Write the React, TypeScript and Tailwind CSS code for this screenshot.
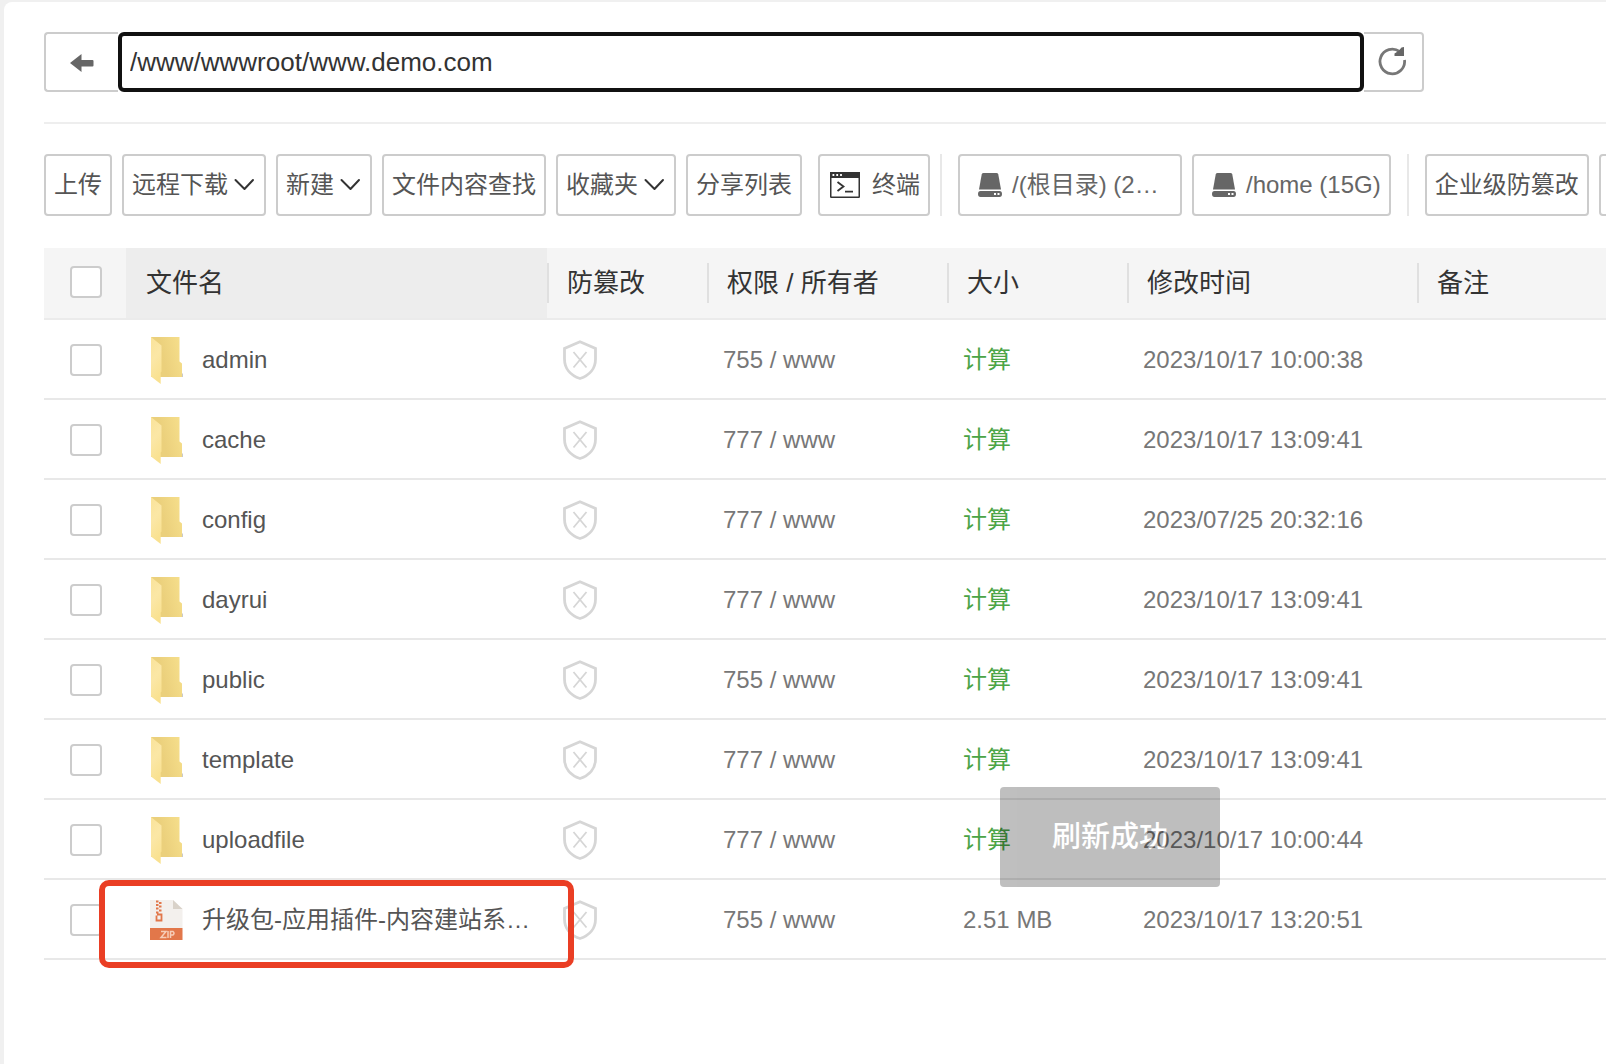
import React from "react";

const ROWS = [
  { name: "admin", perm: "755 / www", time: "2023/10/17 10:00:38" },
  { name: "cache", perm: "777 / www", time: "2023/10/17 13:09:41" },
  { name: "config", perm: "777 / www", time: "2023/07/25 20:32:16" },
  { name: "dayrui", perm: "777 / www", time: "2023/10/17 13:09:41" },
  { name: "public", perm: "755 / www", time: "2023/10/17 13:09:41" },
  { name: "template", perm: "777 / www", time: "2023/10/17 13:09:41" },
  { name: "uploadfile", perm: "777 / www", time: "2023/10/17 10:00:44" },
  { name: "升级包-应用插件-内容建站系…", perm: "755 / www", time: "2023/10/17 13:20:51", size: "2.51 MB" },
];

const HEADERS = ["防篡改", "权限 / 所有者", "大小", "修改时间", "备注"];

function Chevron() {
  return (
    <svg className="ml-1.5 h-3.5 w-[22px]" viewBox="0 0 22 14" fill="none" stroke="#333" strokeWidth="2" strokeLinecap="round" strokeLinejoin="round" aria-hidden="true">
      <path d="M1.500 2 10.500 11 19 2" />
    </svg>
  );
}

function Drive() {
  return (
    <svg className="mr-2.5 h-6 w-6 shrink-0" viewBox="0 0 24 24" fill="#666" aria-hidden="true">
      <path d="M5.5 0h13q1.4 0 1.8 1.4L23 16.4H1L3.7 1.4Q4.1 0 5.5 0Z" />
      <path fillRule="evenodd" d="M2.5 18h19q2.5 0 2.5 3t-2.500 3h-19Q0 24 0 21t2.500-3ZM16 20v2h2v-2Zm3.500 0v2h2v-2Z" />
    </svg>
  );
}

function TerminalIcon() {
  return (
    <svg className="mr-3 ml-0.5 h-[26px] w-[30px] shrink-0" viewBox="0 0 30 26" fill="none" aria-hidden="true">
      <rect x="0.75" y="0.75" width="28.500" height="24.500" rx="0.500" stroke="#333" strokeWidth="1.500" />
      <path d="M0 0h30v6H0Z" fill="#333" />
      <path d="M2.500 3h1.800M6.300 3h1.800M10.100 3h1.800" stroke="#fff" strokeWidth="1.800" />
      <path d="m7.500 10 6 4.500-6 4.500M15 19.700h8" stroke="#333" strokeWidth="1.800" />
    </svg>
  );
}

function Folder() {
  return (
    <svg className="h-12 w-9 shrink-0" viewBox="-1 -1 36 48" aria-hidden="true">
      <defs>
        <linearGradient id="folderBack" x1="0" x2="1" y1="0.3" y2="0">
          <stop offset="0.300" stopColor="#ebd07c" />
          <stop offset="1" stopColor="#f7e08d" />
        </linearGradient>
        <linearGradient id="folderFront" x1="0" x2="0.300" y1="0" y2="1">
          <stop offset="0" stopColor="#fae39a" />
          <stop offset="0.500" stopColor="#fbe7a6" />
          <stop offset="1" stopColor="#f9e190" />
        </linearGradient>
      </defs>
      <path d="M0 0h28.500v24.500l2.500 2V40H0Z" fill="url(#folderBack)" />
      <path d="M0 0 10.500 8.500V34.500l-.8 1V47L0 39.500Z" fill="url(#folderFront)" />
      <path d="M31.500 36.500V40" stroke="#bbb" strokeWidth="0.800" />
    </svg>
  );
}

function ZipFile() {
  return (
    <svg className="h-10 w-9 shrink-0" viewBox="0 0 36 40" aria-hidden="true">
      <path d="M0 0h23l9.500 9V28H0Z" fill="#f3f0ed" />
      <path d="M23 0v9h9.500Z" fill="#d9d2c9" />
      <path d="M0 28h32.500v12H0Z" fill="#e2774a" />
      <path d="M6 1.500h2.500M9 3h2.500M6 5h2.500M9 6.500h2.500M6 8.500h2.500M9 10.500h2.500M6 12.500h2.500M7 14.500h4.500v6H6.500v-5" fill="none" stroke="#e2774a" strokeWidth="1.800" />
      <path d="M11 31.500h5l-5 6h5.500M18 31v7M20.500 38v-6.500h2.500q2 1.700 0 3.500h-2.500" fill="none" stroke="#f6cdb8" strokeWidth="1.500" />
    </svg>
  );
}

function Shield() {
  return (
    <svg className="h-10 w-[34px]" viewBox="0 0 34 40" fill="none" stroke="#d6d6d6" aria-hidden="true">
      <path d="M17 1.700 32.500 8.500V19C32.500 28.500 26.500 35.500 17 38.500 7.500 35.500 1.500 28.500 1.500 19V8.500Z" strokeWidth="2.800" />
      <path d="m10.500 12 13 15.500M23.500 12l-13 15.500" strokeWidth="1.800" />
    </svg>
  );
}

function ToolButton({ children, className = "" }: { children: React.ReactNode; className?: string }) {
  return (
    <button type="button" className={`flex h-[62px] shrink-0 items-center rounded border-2 border-[#ccc] bg-white px-2 text-2xl whitespace-nowrap text-[#555] ${className}`}>
      {children}
    </button>
  );
}

function Tick({ label }: { label: string }) {
  return (
    <input type="checkbox" aria-label={label} className="ml-[26px] block h-8 w-8 appearance-none rounded border-2 border-[#ccc] bg-white" />
  );
}

export default function App() {
  return (
    <div className="min-h-screen overflow-hidden bg-[#f0f0f0] pt-0.5 pl-1 font-['Liberation_Sans','Noto_Sans_CJK_SC',sans-serif]">
      <main className="relative min-h-screen rounded-tl-lg bg-white pt-[30px] pl-10">
        <div className="flex h-[60px] w-full max-w-[1380px]">
          <button type="button" aria-label="返回" className="flex w-[74px] shrink-0 items-center rounded-l border-2 border-r-0 border-[#ccc] pt-0.5 pl-6">
            <svg className="h-[18px] w-6" viewBox="0 0 24 18" fill="#666" aria-hidden="true">
              <path d="M0 9 11.500 0v6H22.500q1 0 1 1v4.500q0 1-1 1h-11V18Z" />
            </svg>
          </button>
          <input type="text" aria-label="路径" defaultValue="/www/wwwroot/www.demo.com" className="min-w-0 flex-1 rounded-md border-4 border-[#111] bg-white px-2 text-[26px] text-[#333] outline-none" />
          <button type="button" aria-label="刷新" className="flex w-[60px] shrink-0 items-center rounded-r border-2 border-l-0 border-[#ccc] pl-3.5">
            <svg className="h-[30px] w-7" viewBox="0 0 28 30" fill="none" aria-hidden="true">
              <path d="M26.500 13A12.300 12.300 0 1 1 21.500 4.500" stroke="#777" strokeWidth="2.800" />
              <path d="M26 0v9h-9.500v-2.500l4-2.500 3-3.500Z" fill="#666" />
            </svg>
          </button>
        </div>

        <div className="mt-[30px] border-t-2 border-[#eee]" />

        <div className="mt-[30px] flex gap-2.5 overflow-hidden">
          <ToolButton>上传</ToolButton>
          <ToolButton>远程下载<Chevron /></ToolButton>
          <ToolButton>新建<Chevron /></ToolButton>
          <ToolButton>文件内容查找</ToolButton>
          <ToolButton>收藏夹<Chevron /></ToolButton>
          <ToolButton>分享列表</ToolButton>
          <ToolButton className="ml-1.5"><TerminalIcon />终端</ToolButton>
          <div className="w-0.5 shrink-0 bg-[#e8e8e8]" />
          <ToolButton className="ml-1.5 w-56 pl-[18px] text-[#666]"><Drive />/(根目录) (2…</ToolButton>
          <ToolButton className="pl-[18px] text-[#666]"><Drive />/home (15G)</ToolButton>
          <div className="ml-1.5 w-0.5 shrink-0 bg-[#e8e8e8]" />
          <ToolButton className="ml-1.5">企业级防篡改</ToolButton>
          <button type="button" aria-label="更多" className="h-[62px] w-24 shrink-0 rounded border-2 border-[#ccc]" />
        </div>

        <table className="mt-8 w-full table-fixed border-separate border-spacing-0 text-left">
          <colgroup>
            <col className="w-[82px]" />
            <col className="w-[421px]" />
            <col className="w-[160px]" />
            <col className="w-[240px]" />
            <col className="w-[180px]" />
            <col className="w-[290px]" />
            <col />
          </colgroup>
          <thead>
            <tr className="h-[72px] bg-[#f5f5f5] text-[26px] text-[#333]">
              <th className="border-b-2 border-[#ebebeb] p-0 pb-0.5"><Tick label="全选" /></th>
              <th className="border-b-2 border-[#ebebeb] bg-[#ededed] p-0 pl-5 font-normal">文件名</th>
              {HEADERS.map((h) => (
                <th key={h} className="border-b-2 border-[#ebebeb] p-0 font-normal">
                  <div className="flex h-10 items-center border-l-2 border-[#e0e0e0] pl-[18px]">{h}</div>
                </th>
              ))}
            </tr>
          </thead>
          <tbody>
            {ROWS.map((r) => (
              <tr key={r.name} className="h-20 text-2xl text-[#777] *:border-b-2 *:border-[#e8e8e8] *:p-0 *:pt-0.5">
                <td><Tick label={r.name} /></td>
                <td>
                  <div className="flex items-center gap-4 pl-6 text-[#555]">
                    {r.size ? <ZipFile /> : <Folder />}
                    <span className="whitespace-nowrap">{r.name}</span>
                  </div>
                </td>
                <td><div className="pl-4"><Shield /></div></td>
                <td><div className="pl-4">{r.perm}</div></td>
                <td>
                  <div className="pl-4">{r.size ?? <a href="#size" className="text-[#4ba446]">计算</a>}</div>
                </td>
                <td><div className="pl-4">{r.time}</div></td>
                <td />
              </tr>
            ))}
          </tbody>
        </table>

        <div className="pointer-events-none absolute top-[878px] left-[95px] h-[88px] w-[475px] rounded-[10px] border-6 border-[#ea3e24]" />
        <div role="status" className="absolute top-[785px] left-[996px] flex h-[100px] w-[220px] items-center justify-center rounded bg-black/60 pt-0.5 text-[29px] font-medium text-white opacity-[.42]">
          刷新成功
        </div>
      </main>
    </div>
  );
}
